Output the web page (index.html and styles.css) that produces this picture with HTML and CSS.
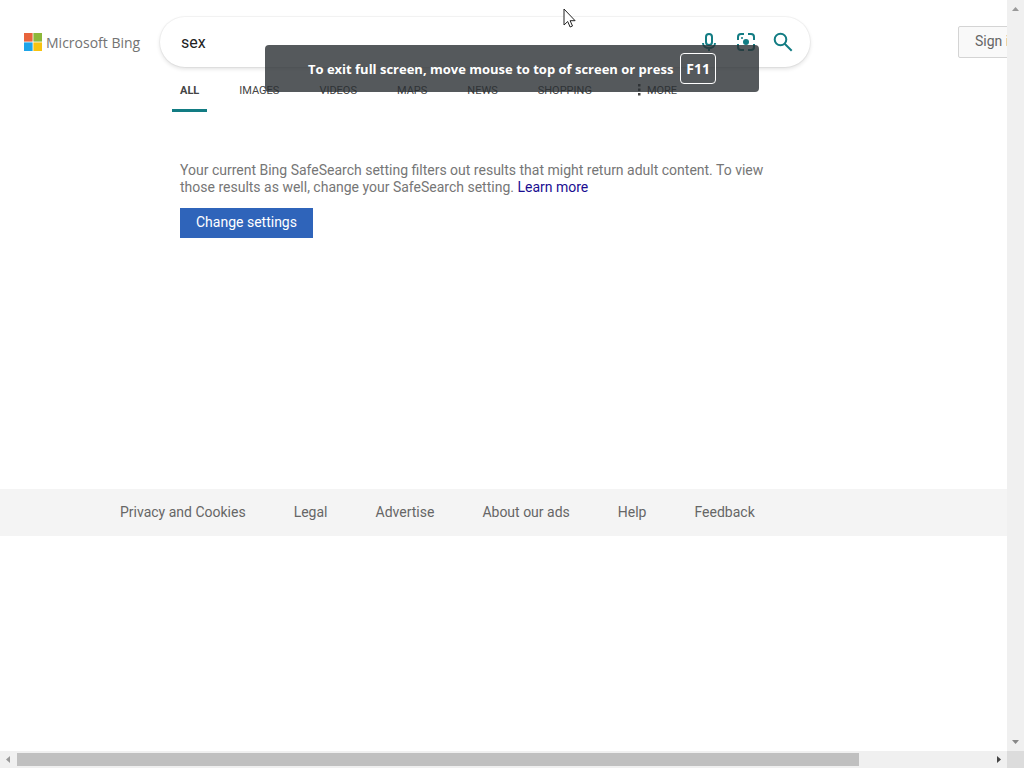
FILE: index.html
```html
<!DOCTYPE html>
<html lang="en">
<head>
    <meta charset="UTF-8">
    <meta name="viewport" content="width=device-width, initial-scale=1.0">
    <title>Microsoft Bing</title>
    <link rel="stylesheet" href="styles.css">
</head>
<body>
    <div class="viewport">
        <header class="header">
            <a class="logo" href="#">
                <svg class="logo-mark" viewBox="0 0 18 18" aria-hidden="true">
                    <rect width="8.6" height="8.6" fill="#e8643c"/>
                    <rect x="9.4" width="8.6" height="8.6" fill="#8cb83a"/>
                    <rect y="9.4" width="8.6" height="8.6" fill="#1ea4e8"/>
                    <rect x="9.4" y="9.4" width="8.6" height="8.6" fill="#f7c30f"/>
                </svg>
                <span>Microsoft Bing</span>
            </a>
            <form class="search">
                <input class="search-input" type="text" value="sex" aria-label="Search">
                <button class="icon-button" type="button" aria-label="Search using voice">
                    <svg width="20" height="20" viewBox="0 0 20 20" fill="none" stroke="#127c83" stroke-width="2">
                        <rect x="7" y="2" width="6" height="11" rx="3"/>
                        <path d="M4 11c0 3 2.5 5 6 5s6-2 6-5M10 16v3"/>
                    </svg>
                </button>
                <button class="icon-button" type="button" aria-label="Search using an image">
                    <svg width="20" height="20" viewBox="0 0 20 20" fill="none" stroke="#127c83" stroke-width="2">
                        <path d="M2 8V5a3 3 0 0 1 3-3h3M12 2h3a3 3 0 0 1 3 3v3M18 12v3a3 3 0 0 1-3 3h-3M8 18H5a3 3 0 0 1-3-3v-3"/>
                        <circle cx="10" cy="10" r="3" fill="#127c83" stroke="none"/>
                        <circle cx="6" cy="6" r="1" fill="#127c83" stroke="none"/>
                    </svg>
                </button>
                <button class="icon-button" type="submit" aria-label="Search">
                    <svg width="20" height="20" viewBox="0 0 20 20" fill="none" stroke="#127c83" stroke-width="2">
                        <circle cx="7.5" cy="7.5" r="5.8"/>
                        <path d="M11.7 11.7l7 7"/>
                    </svg>
                </button>
            </form>
            <button class="sign-in" type="button">Sign in</button>
        </header>

        <nav class="tabs">
            <a class="tab active" href="#">ALL</a>
            <a class="tab" href="#">IMAGES</a>
            <a class="tab" href="#">VIDEOS</a>
            <a class="tab" href="#">MAPS</a>
            <a class="tab" href="#">NEWS</a>
            <a class="tab" href="#">SHOPPING</a>
            <a class="tab more" href="#">
                <svg width="3" height="12" viewBox="0 0 3 12" fill="#444" aria-hidden="true">
                    <rect width="2.5" height="2.5"/>
                    <rect y="4.5" width="2.5" height="2.5"/>
                    <rect y="9" width="2.5" height="2.5"/>
                </svg>
                MORE
            </a>
        </nav>

        <main class="results">
            <p>Your current Bing SafeSearch setting filters out results that might return adult content. To view those results as well, change your SafeSearch setting. <a href="#">Learn more</a></p>
            <button class="change-settings" type="button">Change settings</button>
        </main>

        <footer class="footer">
            <a href="#">Privacy and Cookies</a>
            <a href="#">Legal</a>
            <a href="#">Advertise</a>
            <a href="#">About our ads</a>
            <a href="#">Help</a>
            <a href="#">Feedback</a>
        </footer>
    </div>

    <!-- Scrollbars -->
    <div class="scroll-y">
        <svg width="7" height="4" viewBox="0 0 7 4" fill="#999"><path d="M0 4L3.5 0L7 4z"/></svg>
        <svg width="7" height="4" viewBox="0 0 7 4" fill="#888"><path d="M0 0h7L3.5 4z"/></svg>
    </div>
    <div class="scroll-x">
        <svg width="17" height="7" viewBox="0 0 17 7" fill="#999"><path d="M10 0v7L6 3.5z"/></svg>
        <div class="track"><div class="thumb"></div></div>
        <svg width="17" height="7" viewBox="0 0 17 7" fill="#444"><path d="M7 0v7l4-3.5z"/></svg>
    </div>
    <div class="scroll-corner"></div>

    <!-- Full screen message -->
    <div class="fullscreen-toast">
        <span>To exit full screen, move mouse to top of screen or press</span>
        <kbd>F11</kbd>
    </div>

    <svg class="cursor" width="13" height="20" viewBox="0 0 13 20" aria-hidden="true">
        <path d="M1 1v16l3.7-3.5 2.4 5.5 2.4-1-2.4-5.3h5z" fill="#fff" stroke="#222"/>
    </svg>
</body>
</html>
```
FILE: styles.css
```css
* {
    box-sizing: border-box;
}

body {
    display: grid;
    grid-template-columns: minmax(0, 1fr) 17px;
    grid-template-rows: minmax(0, 1fr) 17px;
    height: 100vh;
    margin: 0;
    background: #fff;
    color: #666;
    font-family: Roboto, "Liberation Sans", sans-serif;
    font-size: 14px;
}

a {
    color: inherit;
    text-decoration: none;
}

button,
input {
    font-family: inherit;
}

.viewport {
    overflow: hidden;
}

/* Header */
.header {
    display: flex;
    align-items: center;
    padding: 17px 0 0 24px;
}

.logo {
    display: flex;
    flex: none;
    align-items: center;
    gap: 4px;
    width: 136px;
    color: #737373;
    font-family: "Open Sans", "Noto Sans", sans-serif;
    font-size: 14px;
    font-weight: 500;
    white-space: nowrap;
}

.logo-mark {
    flex: none;
    width: 18px;
    height: 18px;
}

.search {
    display: flex;
    flex: 0 1 650px;
    align-items: center;
    gap: 17px;
    height: 50px;
    padding: 0 17px 0 21px;
    border-radius: 25px;
    background: #fff;
    box-shadow: 0 0 0 1px rgba(0, 0, 0, 0.04), 0 2px 4px rgba(0, 0, 0, 0.12);
}

.search-input {
    flex: 1;
    min-width: 0;
    padding: 0;
    border: 0;
    outline: 0;
    background: none;
    color: #222;
    font-size: 16px;
}

.icon-button {
    display: flex;
    flex: none;
    padding: 0;
    border: 0;
    background: none;
}

.sign-in {
    flex: none;
    width: 90px;
    height: 32px;
    margin-left: auto;
    margin-right: -41px;
    padding: 0 16px 2px;
    border: 1px solid #d4d4d4;
    border-radius: 2px;
    background: #f9f9f9;
    color: #666;
    font-size: 14px;
    text-align: left;
}

/* Tabs */
.tabs {
    display: flex;
    gap: 24px;
    padding-left: 172px;
    margin-top: 12px;
}

.tab {
    height: 33px;
    padding: 4px 8px 0;
    color: #444;
    font-size: 11px;
    line-height: 15px;
}

.tab.active {
    border-bottom: 3px solid #127c83;
    font-weight: 700;
}

.more {
    display: flex;
    align-items: flex-start;
    gap: 6px;
    margin-left: 6px;
}

.more svg {
    margin-top: 1px;
}

/* Results */
.results {
    max-width: 780px;
    padding: 50px 0 0 180px;
    line-height: 17px;
}

.results p {
    margin: 0 0 12px;
    color: #767676;
}

.results a {
    color: #1a0d91;
}

.change-settings {
    height: 30px;
    padding: 0 16px 2px;
    border: 0;
    background: #2f64ba;
    color: #fff;
    font-size: 14px;
}

/* Footer */
.footer {
    display: flex;
    gap: 48px;
    align-items: center;
    height: 47px;
    margin-top: 251px;
    padding: 0 0 2px 120px;
    background: #f4f4f4;
    white-space: nowrap;
}

/* Scrollbars */
.scroll-y {
    display: flex;
    flex-direction: column;
    justify-content: space-between;
    align-items: center;
    padding: 7px 0;
    background: #f0f0f0;
}

.scroll-x {
    display: flex;
    align-items: center;
    background: #f0f0f0;
}

.track {
    flex: 1;
}

.thumb {
    width: 86.5%;
    height: 13px;
    background: #c0c0c0;
}

.scroll-corner {
    background: #dcdcdc;
}

/* Full screen message */
.fullscreen-toast {
    position: absolute;
    top: 45px;
    left: 50%;
    display: flex;
    justify-content: center;
    align-items: center;
    gap: 7px;
    width: 494px;
    height: 47px;
    border-radius: 4px;
    background: rgba(43, 47, 51, 0.8);
    color: #fff;
    font-family: "Open Sans", "Noto Sans", sans-serif;
    font-size: 13px;
    font-weight: 700;
    white-space: nowrap;
    transform: translateX(-50%);
}

.fullscreen-toast kbd {
    padding: 5px;
    border: 1px solid #fff;
    border-radius: 4px;
    font-family: inherit;
    font-size: 14px;
    line-height: 19px;
}

.cursor {
    position: absolute;
    top: 8px;
    left: 563px;
}
```
